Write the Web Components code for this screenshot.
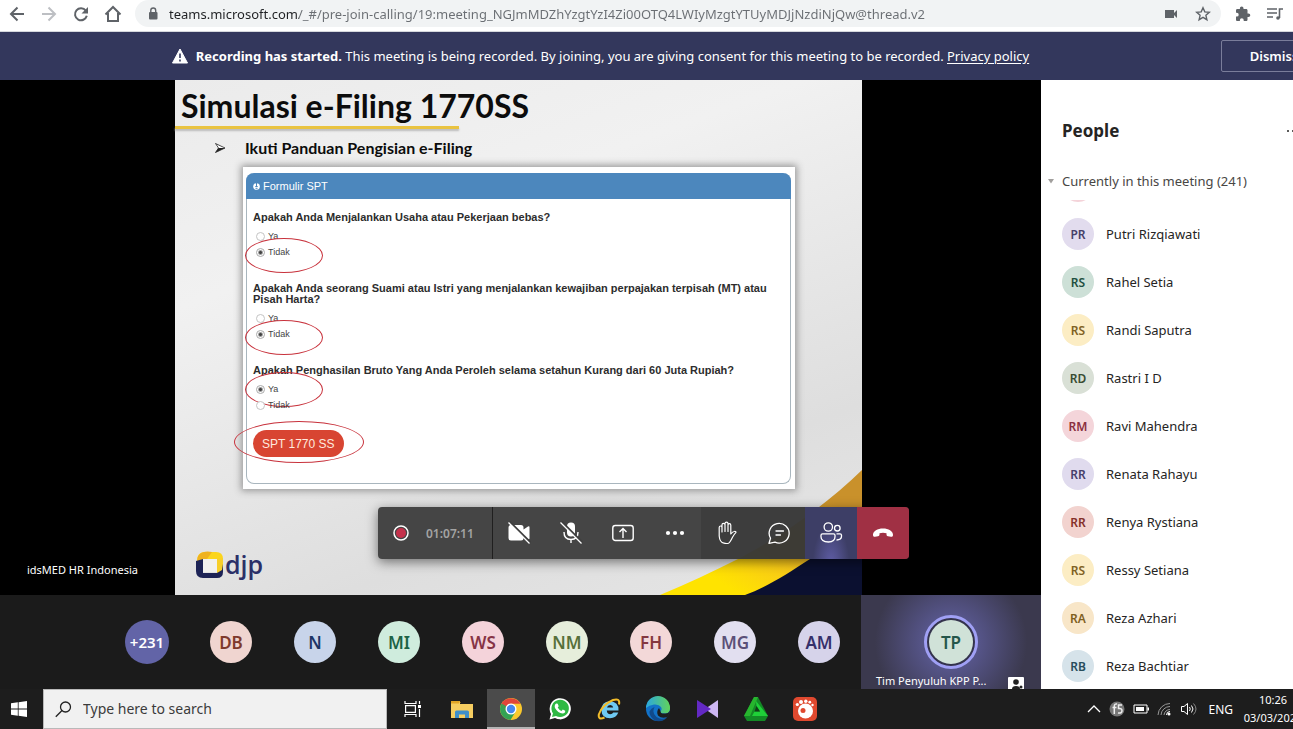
<!DOCTYPE html>
<html lang="en">
<head>
<meta charset="utf-8">
<title>Meeting</title>
<style>
    html, body {
        height: 100%;
        margin: 0;
    }

    body {
        font-family: "Noto Sans", "Open Sans", sans-serif;
        font-size: 13px;
        overflow: hidden;
    }
</style>
</head>
<body>
<meeting-app></meeting-app>

<script>
// Small helper: every element here renders into an open shadow root
class BaseElement extends HTMLElement {
    constructor() {
        super();
        this.attachShadow({ mode: 'open' });
    }

    connectedCallback() {
        this.render();
    }
}

const reset = `
    *, :host { box-sizing: border-box; }
    button { font: inherit; color: inherit; background: none; border: 0; padding: 0; margin: 0; }
    svg { display: block; }
`;

class BrowserBar extends BaseElement {
    render() {
        this.shadowRoot.innerHTML = `
            <style>
                ${reset}
                :host {
                    display: flex;
                    align-items: flex-start;
                    height: 32px;
                    background: #fff;
                    border-bottom: 1px solid #d5d7dc;
                    color: #5f6368;
                    padding-left: 1px;
                }
                button {
                    width: 32px;
                    height: 27px;
                    display: grid;
                    place-items: center;
                }
                .off { color: #bdbfc3; }
                .address {
                    flex: 1;
                    display: flex;
                    align-items: center;
                    height: 27px;
                    margin: 0 6px;
                    padding: 0 2px 0 12px;
                    border-radius: 14px;
                    background: #f1f3f4;
                }
                input {
                    flex: 1;
                    min-width: 0;
                    border: 0;
                    padding: 0 0 0 10px;
                    font: inherit;
                    line-height: 20px;
                    outline: 0;
                    background: linear-gradient(90deg, #202124 140px, #6a6e73 140px);
                    -webkit-background-clip: text;
                    background-clip: text;
                    -webkit-text-fill-color: transparent;
                }
                .spare { margin-right: 2px; }
            </style>
            <button aria-label="Back"><svg width="16" height="16" viewBox="0 0 16 16" fill="none" stroke="currentColor" stroke-width="2"><path d="M15 8H2M8.500 1.500L2 8l6.500 6.500"/></svg></button>
            <button class="off" aria-label="Forward"><svg width="16" height="16" viewBox="0 0 16 16" fill="none" stroke="currentColor" stroke-width="2"><path d="M1 8h13M7.500 1.500L14 8l-6.500 6.500"/></svg></button>
            <button aria-label="Reload"><svg width="16" height="16" viewBox="0 0 16 16"><path d="M12.800 4.600A6 6 0 1 0 13.800 9.800" fill="none" stroke="currentColor" stroke-width="2"/><path d="M15 1v6.500H8.500z" fill="currentColor"/></svg></button>
            <button aria-label="Home"><svg width="18" height="18" viewBox="0 0 18 18" fill="none" stroke="currentColor" stroke-width="2"><path d="M1.500 9.500L9 2l7.500 7.500M4 8v8h10V8"/></svg></button>
            <div class="address">
                <svg width="12" height="14" viewBox="0 0 12 14"><rect x="2" y="5" width="8.500" height="7.500" rx="1" fill="currentColor"/><path d="M3.800 5.500V3.500a2.400 2.400 0 0 1 4.900 0v2" fill="none" stroke="currentColor" stroke-width="1.400"/></svg>
                <input type="text" aria-label="Address" value="teams.microsoft.com/_#/pre-join-calling/19:meeting_NGJmMDZhYzgtYzI4Zi00OTQ4LWIyMzgtYTUyMDJjNzdiNjQw@thread.v2">
                <button aria-label="Camera"><svg width="14" height="10" viewBox="0 0 14 10" fill="currentColor"><path d="M1 1h9v3l3-3v8l-3-3v3H1z"/></svg></button>
                <button aria-label="Bookmark"><svg width="16" height="16" viewBox="0 0 16 16" fill="none" stroke="currentColor" stroke-width="1.400"><path d="M8 1.800l1.800 4.100 4.500.4-3.400 3 1 4.400L8 11.400l-3.900 2.300 1-4.400-3.400-3 4.500-.4z"/></svg></button>
            </div>
            <button aria-label="Extensions"><svg width="16" height="16" viewBox="0 0 16 16" fill="currentColor"><path d="M13.500 7.500h-1V4.300c0-.7-.6-1.300-1.300-1.300H8.500V2.300a1.800 1.800 0 0 0-3.600 0V3H2.300C1.600 3 1 3.600 1 4.300v2.500h.8a1.900 1.900 0 0 1 0 3.800H1v3.100c0 .7.600 1.300 1.300 1.300h2.600v-.9a1.900 1.900 0 0 1 3.800 0v.9h2.500c.7 0 1.300-.6 1.300-1.300v-2.600h1a1.800 1.800 0 0 0 0-3.600z"/></svg></button>
            <button class="spare" aria-label="Media"><svg width="18" height="14" viewBox="0 0 18 14" fill="none" stroke="currentColor" stroke-width="1.600"><path d="M1 2h10M1 6h10M1 10h6M13.500 11V2H17"/><circle cx="12" cy="11" r="1.800" fill="currentColor" stroke="none"/></svg></button>
        `;
    }
}

class RecordingBanner extends BaseElement {
    render() {
        this.shadowRoot.innerHTML = `
            <style>
                ${reset}
                :host {
                    display: flex;
                    align-items: center;
                    height: 48px;
                    background: #33375c;
                    color: #fff;
                    overflow: hidden;
                }
                p {
                    flex: 1;
                    margin: 0 20px 0 0;
                    display: flex;
                    align-items: center;
                    justify-content: center;
                    white-space: nowrap;
                }
                svg { margin-right: 8px; }
                a { color: inherit; text-underline-offset: 2px; }
                button {
                    height: 32px;
                    width: 106px;
                    margin-right: -34px;
                    border: 1px solid #7a7d9a;
                    border-radius: 2px;
                    font-weight: 600;
                }
            </style>
            <p>
                <svg width="16" height="16" viewBox="0 0 16 16"><path d="M8 1l7.500 14H.500z" fill="#fff" stroke="#fff" stroke-linejoin="round"/><path d="M8 5.500v4.500M8 11.500v2" stroke="#33375c" stroke-width="1.600"/></svg>
                <span><b>Recording has started.</b> This meeting is being recorded. By joining, you are giving consent for this meeting to be recorded. <a href="#">Privacy policy</a></span>
            </p>
            <button>Dismiss</button>
        `;
    }
}

class AvatarBadge extends BaseElement {
    render() {
        this.shadowRoot.innerHTML = `
            <style>
                :host {
                    display: grid;
                    place-items: center;
                    flex: none;
                    width: var(--size, 32px);
                    height: var(--size, 32px);
                    border-radius: 50%;
                    background: ${this.getAttribute('fill')};
                    color: ${this.getAttribute('ink')};
                    font-size: var(--text, 12px);
                    font-weight: 600;
                }
            </style>
            <slot></slot>
        `;
    }
}

class PersonRow extends BaseElement {
    render() {
        this.shadowRoot.innerHTML = `
            <style>
                :host {
                    display: flex;
                    align-items: center;
                    gap: 12px;
                    height: 48px;
                    flex: none;
                    color: #252423;
                }
            </style>
            <avatar-badge fill="${this.getAttribute('fill')}" ink="${this.getAttribute('ink')}">${this.getAttribute('initials') || ''}</avatar-badge>
            <slot></slot>
        `;
    }
}

const people = [
    ['', '', '#f4d3d9', '#8e3b4b'],
    ['PR', 'Putri Rizqiawati', '#e2dcee', '#47416a'],
    ['RS', 'Rahel Setia', '#cde0d7', '#1f5040'],
    ['RS', 'Randi Saputra', '#fcedc4', '#806223'],
    ['RD', 'Rastri I D', '#d9e0d6', '#3a4d33'],
    ['RM', 'Ravi Mahendra', '#f4d5da', '#8b3040'],
    ['RR', 'Renata Rahayu', '#e0dbee', '#47416a'],
    ['RR', 'Renya Rystiana', '#f2d3cf', '#85302a'],
    ['RS', 'Ressy Setiana', '#fcedc4', '#806223'],
    ['RA', 'Reza Azhari', '#f8e6c8', '#80601f'],
    ['RB', 'Reza Bachtiar', '#d6e3ea', '#294d5c']
];

class PeoplePanel extends BaseElement {
    render() {
        this.shadowRoot.innerHTML = `
            <style>
                ${reset}
                :host {
                    display: flex;
                    flex-direction: column;
                    min-height: 0;
                    background: #fff;
                    color: #484644;
                    overflow: hidden;
                }
                header {
                    display: flex;
                    align-items: center;
                    justify-content: space-between;
                    padding: 39px 0 0 21px;
                    margin-right: -8px;
                }
                h2 {
                    margin: 0;
                    font-size: 17px;
                    line-height: 24px;
                    color: #252423;
                }
                .group {
                    display: flex;
                    align-items: center;
                    gap: 7px;
                    padding-left: 6px;
                    margin-top: 28px;
                    line-height: 20px;
                }
                .list {
                    flex: 1;
                    display: flex;
                    flex-direction: column;
                    min-height: 0;
                    margin-top: 9px;
                    padding-left: 21px;
                    overflow: hidden;
                }
            </style>
            <header>
                <h2>People</h2>
                <button aria-label="More options"><svg width="15" height="4" viewBox="0 0 15 4" fill="#252423"><circle cx="2" cy="2" r="1"/><circle cx="7" cy="2" r="1"/><circle cx="12" cy="2" r="1"/></svg></button>
            </header>
            <button class="group"><svg width="8" height="5" viewBox="0 0 8 5"><path d="M1 0h6L4 4.500z" fill="#a19f9d"/></svg>Currently in this meeting (241)</button>
            <div class="list">
                ${people.map(([initials, name, fill, ink]) =>
                    `<person-row initials="${initials}" fill="${fill}" ink="${ink}">${name}</person-row>`).join('')}
            </div>
        `;
        const list = this.shadowRoot.querySelector('.list');
        requestAnimationFrame(() => { list.scrollTop = 38; });
    }
}

class FormQuestion extends BaseElement {
    render() {
        const picked = this.getAttribute('answer');
        const options = ['Ya', 'Tidak'].map(text => `
            <label class="${text === picked ? 'picked' : ''}">
                <input type="radio" name="answer" ${text === picked ? 'checked' : ''}>${text}
            </label>`).join('');
        this.shadowRoot.innerHTML = `
            <style>
                ${reset}
                :host { display: block; }
                fieldset { border: 0; margin: 0; padding: 0; min-width: 0; }
                legend {
                    padding: 0;
                    margin-bottom: 5px;
                    font-weight: bold;
                    font-size: 11px;
                    line-height: 11px;
                    color: #2d2d2d;
                }
                label {
                    position: relative;
                    display: flex;
                    align-items: center;
                    gap: 3px;
                    height: 16px;
                    padding-left: 3px;
                    font-size: 9px;
                    color: #444;
                }
                input {
                    appearance: none;
                    width: 9px;
                    height: 9px;
                    margin: 0;
                    border: 1px solid #c4c4c4;
                    border-radius: 50%;
                    background: #fff;
                }
                input:checked {
                    border-color: #aaa;
                    background: radial-gradient(circle, #444 0 1px, #fff 3px);
                }
                /* hand-drawn ring round the chosen answer */
                .picked::after {
                    content: "";
                    position: absolute;
                    left: -8px;
                    top: var(--ring-top, -6px);
                    width: 76px;
                    height: 33px;
                    border: 1px solid #c8323c;
                    border-radius: 50%;
                }
            </style>
            <fieldset>
                <legend><slot></slot></legend>
                ${options}
            </fieldset>
        `;
    }
}

class SharedSlide extends BaseElement {
    render() {
        this.shadowRoot.innerHTML = `
            <style>
                ${reset}
                :host {
                    position: relative;
                    display: flex;
                    flex-direction: column;
                    background: linear-gradient(160deg, #ebebeb, #f1f1f1 30%, #dedede 75%, #e6e6e6);
                    color: #0c0c0c;
                }
                .swoosh { position: absolute; right: 0; bottom: 0; }
                h1 {
                    margin: 6px 0 0 6px;
                    font: bold 32px/40px Lato, sans-serif;
                    white-space: nowrap;
                }
                .rule {
                    width: 284px;
                    height: 3px;
                    background: #e9c341;
                    box-shadow: 0 2px 2px #bbb;
                }
                .point {
                    display: flex;
                    align-items: center;
                    gap: 19px;
                    margin: 9px 0 0 40px;
                    font: bold 16px/20px Lato, sans-serif;
                }
                .card {
                    position: relative;
                    margin: 9px 67px 0 68px;
                    padding: 6px 4px 5px 3px;
                    background: #fff;
                    box-shadow: 0 0 7px 2px #999;
                    font-family: "Liberation Sans", Arial, sans-serif;
                }
                .form {
                    border: 1px solid #a9b6be;
                    border-top: 0;
                    border-radius: 8px;
                }
                .form header {
                    display: flex;
                    align-items: center;
                    gap: 3px;
                    height: 26px;
                    margin: 0 -1px;
                    padding-left: 7px;
                    border-radius: 8px 8px 0 0;
                    background: #4c87bd;
                    color: #fff;
                    font-size: 11px;
                }
                .fields {
                    display: flex;
                    flex-direction: column;
                    gap: 23px;
                    padding: 13px 8px 26px 6px;
                }
                .send { position: relative; width: max-content; margin-top: -6px; }
                .send button {
                    display: block;
                    height: 27px;
                    padding: 0 9px;
                    border-radius: 14px;
                    background: #d84532;
                    color: #ffeadf;
                    font-size: 12px;
                }
                .send::after {
                    content: "";
                    position: absolute;
                    inset: -9px -20px -6px -19px;
                    border: 1px solid #c8323c;
                    border-radius: 50%;
                }
                .last { --ring-top: -9px; }
                footer {
                    display: flex;
                    align-items: center;
                    gap: 2px;
                    margin: auto 0 17px 21px;
                    font: 600 25px/28px "Open Sans", sans-serif;
                    color: #2b3068;
                }
            </style>
            <svg class="swoosh" width="210" height="130" viewBox="0 0 210 130">
                <defs><linearGradient id="gold" x1="0" y1="1" x2="1" y2="0"><stop offset=".2" stop-color="#ffe300"/><stop offset=".5" stop-color="#f6c021"/><stop offset=".8" stop-color="#c9912b"/></linearGradient></defs>
                <path d="M8 130C35 119 60 107 86 94C125 74 172 42 210 5V130z" fill="url(#gold)"/>
                <path d="M93 130C115 122 135 109 158 94C176 82 196 68 210 56V130z" fill="#0b1030"/>
            </svg>
            <h1>Simulasi e-Filing 1770SS</h1>
            <div class="rule"></div>
            <div class="point">
                <svg width="11" height="10" viewBox="0 0 11 10"><path d="M.500.500L10 5 .500 9.500 3.500 5z" fill="#fff" stroke="#222" stroke-width=".8"/><path d="M3.500 5H10L.500 9.500z" fill="#222"/></svg>
                Ikuti Panduan Pengisian e-Filing
            </div>
            <div class="card">
                <div class="form">
                    <header><svg width="7" height="8" viewBox="0 0 7 8"><circle cx="3.500" cy="4.500" r="3.300" fill="#fff"/><path d="M3.500 1v4M2.300 4.500h2.400M2.500 6.300h2" stroke="#4c87bd"/></svg>Formulir SPT</header>
                    <div class="fields">
                        <form-question answer="Tidak">Apakah Anda Menjalankan Usaha atau Pekerjaan bebas?</form-question>
                        <form-question answer="Tidak">Apakah Anda seorang Suami atau Istri yang menjalankan kewajiban perpajakan terpisah (MT) atau Pisah Harta?</form-question>
                        <form-question class="last" answer="Ya">Apakah Penghasilan Bruto Yang Anda Peroleh selama setahun Kurang dari 60 Juta Rupiah?</form-question>
                        <div class="send"><button>SPT 1770 SS</button></div>
                    </div>
                </div>
            </div>
            <footer>
                <svg width="27" height="27" viewBox="0 0 27 27">
                    <path d="M1 10Q1 1 9 1h11q7 0 7 7v6l-6-6H8z" fill="#fbd51c"/>
                    <path d="M7 1.200Q11 0 16 1l-5 7H7L1 11Q1 3 7 1.200z" fill="#efb21f"/>
                    <path d="M0 10l7-2v14h14V8l6 5v8q0 6-6 6H7q-7 0-7-7z" fill="#1d2356"/>
                    <path d="M21 8l6-1v6l-1 6-5 3z" fill="#f7cf2a"/>
                    <rect x="7" y="8" width="14" height="13" fill="#f1f1ef"/>
                </svg>
                djp
            </footer>
        `;
    }
}

class CallControls extends BaseElement {
    render() {
        this.shadowRoot.innerHTML = `
            <style>
                ${reset}
                :host {
                    display: flex;
                    height: 52px;
                    border-radius: 4px;
                    overflow: hidden;
                    background: rgba(60, 60, 60, .95);
                    box-shadow: 0 3px 12px rgba(0, 0, 0, .5);
                    color: #fff;
                }
                .status {
                    display: flex;
                    align-items: center;
                    gap: 17px;
                    width: 115px;
                    padding-left: 15px;
                    border-right: 1px solid #201f1f;
                    color: #a3a3a3;
                    font-size: 12px;
                    font-weight: 600;
                }
                button {
                    width: 52px;
                    display: grid;
                    place-items: center;
                }
                .dim { background: rgba(45, 45, 45, .35); }
                .on { background: radial-gradient(ellipse at 50% 110%, #5f5da6, #3d3e66 50%); }
                .end { background: #a03044; }
            </style>
            <div class="status">
                <svg width="16" height="16" viewBox="0 0 16 16"><circle cx="8" cy="8" r="7" fill="none" stroke="#fff" stroke-width="1.500"/><circle cx="8" cy="8" r="5" fill="#c4314b"/></svg>
                01:07:11
            </div>
            <button aria-label="Turn camera on"><svg width="24" height="24" viewBox="0 0 24 24"><path d="M1.500 6.500Q1.500 4 4 4h10q2.500 0 2.500 2.500V8.500L21 5.500q1.500-.8 1.500.8v11q0 1.600-1.500.8l-4.500-3v2q0 2.500-2.500 2.500H4q-2.500 0-2.500-2.500z" fill="#fff"/><path d="M2.500.500l21 21" stroke="#3f3f3f" stroke-width="2"/><path d="M1.500 1.500l21 21" stroke="#fff" stroke-width="1.300"/></svg></button>
            <button aria-label="Unmute"><svg width="24" height="24" viewBox="0 0 24 24"><rect x="8" y="1.500" width="8" height="14" rx="4" fill="#fff"/><path d="M5 11q0 7.500 7 7.500t7-7.500M12 18.500V22" fill="none" stroke="#fff" stroke-width="1.400"/><path d="M2.500.500l21 21" stroke="#3f3f3f" stroke-width="2"/><path d="M1.500 1.500l21 21" stroke="#fff" stroke-width="1.300"/></svg></button>
            <button aria-label="Share"><svg width="24" height="24" viewBox="0 0 24 24" fill="none" stroke="#fff" stroke-width="1.400"><rect x="1.800" y="4.500" width="20.400" height="15" rx="2.500"/><path d="M12 17V8M8.500 11L12 7.500l3.500 3.500"/></svg></button>
            <button aria-label="More actions"><svg width="20" height="6" viewBox="0 0 20 6" fill="#fff"><circle cx="3" cy="3" r="2.100"/><circle cx="10" cy="3" r="2.100"/><circle cx="17" cy="3" r="2.100"/></svg></button>
            <button class="dim" aria-label="Raise hand"><svg width="24" height="24" viewBox="0 0 24 24" fill="none" stroke="#fff" stroke-width="1.200" stroke-linejoin="round" stroke-linecap="round"><path d="M4.200 15V6.500q0-1.500 1.400-1.500T7 6.500V3.800q0-1.500 1.500-1.500T10 3.800V2.700q0-1.500 1.500-1.500T13 2.700v1.500q0-1.500 1.400-1.500t1.400 1.500V13q2-2.500 3.500-2.500 2.200-.3 1.500 1.200-1.500 1.500-3.300 4.500-2.500 5.300-4 6-2 .600-4.500 0-4.300-.8-4.800-7.200zM7 6.500V11M10 4v6.500M13 4v6.500"/></svg></button>
            <button class="dim" aria-label="Chat"><svg width="24" height="24" viewBox="0 0 24 24" fill="none" stroke="#fff" stroke-width="1.300" stroke-linejoin="round" stroke-linecap="round"><path d="M3.500 17.200A10 9.800 0 1 1 8 21.200L2 22.300z"/><path d="M9 10h7.500M9 14h4.500"/></svg></button>
            <button class="on" aria-label="People"><svg width="24" height="24" viewBox="0 0 24 24" fill="none" stroke="#fff" stroke-width="1.300"><circle cx="9.300" cy="6" r="4.200"/><circle cx="18.300" cy="7.200" r="2.800"/><path d="M3.500 12.800h11q1.500 0 1.500 1.500v1.500q0 5-6.500 5.200-7.500-.2-7.500-5.200v-1.500q0-1.500 1.500-1.500zM17.500 12.800h3.500q1.500 0 1.500 1.500v1q0 3.700-5 3.700"/></svg></button>
            <button class="end" aria-label="Leave"><svg width="22" height="10" viewBox="0 0 22 10"><path d="M11 .500c5.500 0 10 2.500 10 6.300 0 1.500-.7 2.200-2 2l-3-.6c-1.300-.3-1.500-1-1.500-2V5.300q-3.500-1.200-7 0v.9c0 1-.2 1.700-1.500 2l-3 .6c-1.300.2-2-.5-2-2C1 3 5.500.500 11 .500z" fill="#fff"/></svg></button>
        `;
    }
}

const participants = [
    ['DB', '#f0d5d0', '#7f3a2c'],
    ['N', '#c8d4ea', '#1d3566'],
    ['MI', '#cfecdd', '#1d6246'],
    ['WS', '#f4d3da', '#863345'],
    ['NM', '#e6eedb', '#56703a'],
    ['FH', '#f3d8d8', '#853840'],
    ['MG', '#e2dff0', '#5b5078'],
    ['AM', '#d6d3ea', '#35306a']
];

class ParticipantStrip extends BaseElement {
    render() {
        this.shadowRoot.innerHTML = `
            <style>
                ${reset}
                :host {
                    display: flex;
                    height: 94px;
                    background: #1b1b1b;
                }
                ul {
                    flex: 1;
                    display: flex;
                    justify-content: flex-end;
                    align-items: center;
                    margin: 0;
                    padding: 0;
                    list-style: none;
                    --size: 42px;
                    --text: 17px;
                }
                li {
                    width: 84px;
                    display: grid;
                    place-items: center;
                }
                .more { --size: 44px; --text: 15px; }
                .speaker {
                    display: flex;
                    flex-direction: column;
                    align-items: center;
                    width: 180px;
                    padding-top: 20px;
                    overflow: hidden;
                    background: radial-gradient(circle at 50% 50%, #5a5992 20px, #3b394e 76px);
                    color: #fff;
                    --size: 44px;
                    --text: 17px;
                }
                .ring {
                    flex: none;
                    padding: 2px;
                    border: 3px solid #a0a0f5;
                    border-radius: 50%;
                    background: #34334d;
                }
                .name {
                    align-self: stretch;
                    display: flex;
                    justify-content: space-between;
                    align-items: flex-start;
                    padding: 0 17px 0 15px;
                    margin-top: 4px;
                    font-size: 11px;
                    line-height: 16px;
                }
                .name svg { flex: none; margin-top: 4px; }
            </style>
            <ul>
                <li class="more"><avatar-badge fill="#6264a7" ink="#fff">+231</avatar-badge></li>
                ${participants.map(([initials, fill, ink]) =>
                    `<li><avatar-badge fill="${fill}" ink="${ink}">${initials}</avatar-badge></li>`).join('')}
            </ul>
            <div class="speaker">
                <div class="ring"><avatar-badge fill="#d0e2d8" ink="#24564a">TP</avatar-badge></div>
                <div class="name">Tim Penyuluh KPP P...
                    <svg width="16" height="12" viewBox="0 0 16 12"><rect width="16" height="13" rx="1" fill="#fff"/><circle cx="8" cy="5" r="2.800" fill="#222"/><path d="M4 12q0-3 4-3t4 3" fill="#222"/><circle cx="13" cy="10" r="1.500" fill="#222"/></svg>
                </div>
            </div>
        `;
    }
}

class TaskBar extends BaseElement {
    render() {
        this.shadowRoot.innerHTML = `
            <style>
                ${reset}
                :host {
                    display: flex;
                    height: 40px;
                    background: #1d1d1d;
                    color: #fff;
                    overflow: hidden;
                }
                button { display: grid; place-items: center; }
                .start { width: 43px; padding-right: 5px; }
                .search {
                    display: flex;
                    align-items: center;
                    gap: 11px;
                    width: 344px;
                    padding-left: 11px;
                    background: #f1f1f1;
                    border: 1px solid #b9b9b9;
                }
                .search input {
                    flex: 1;
                    min-width: 0;
                    border: 0;
                    padding: 0;
                    outline: 0;
                    background: none;
                    font: inherit;
                    font-size: 14px;
                    line-height: 20px;
                }
                .search input::placeholder { color: #3b3b3b; opacity: 1; }
                nav {
                    flex: 1;
                    display: flex;
                    gap: 1px;
                    padding-left: 2px;
                }
                nav button { width: 48px; }
                .active {
                    background: #4b4b4b;
                    box-shadow: inset 0 -2px #b5b5b5;
                }
                .tray {
                    display: flex;
                    align-items: center;
                    gap: 8px;
                    font-size: 12px;
                }
                .lang { margin-left: 3px; }
                .clock {
                    width: 64px;
                    margin-right: -12px;
                    text-align: center;
                    font-size: 11px;
                    line-height: 18px;
                }
            </style>
            <button class="start" aria-label="Start"><svg width="16" height="16" viewBox="0 0 16 16" fill="#fff"><path d="M0 2.200L6.800 1.300V7.600H0zM7.600 1.200L16 0v7.600H7.600zM0 8.400h6.800v6.300L0 13.800zM7.600 8.400H16V16l-8.400-1.200z"/></svg></button>
            <label class="search">
                <svg width="17" height="17" viewBox="0 0 17 17" fill="none" stroke="#222" stroke-width="1.300"><circle cx="10.500" cy="6" r="5"/><path d="M7 9.500L.800 15.800"/></svg>
                <input type="text" placeholder="Type here to search" aria-label="Search">
            </label>
            <nav>
                <button aria-label="Task view"><svg width="18" height="16" viewBox="0 0 18 16" fill="none" stroke="#fff" stroke-width="1.200"><path d="M1 0v2.500h11V0M1 16v-2.500h11V16M1.600 4.600h9.800v6.800H1.600zM15.500 0v3M15.500 8v8"/><path d="M14 4h3v3h-3z" fill="#fff" stroke="none"/></svg></button>
                <button aria-label="File Explorer"><svg width="22" height="19" viewBox="0 0 22 19"><path d="M0 1h8l2 2H0z" fill="#d99a1c"/><path d="M0 1h9v3h13v14H0z" fill="#f6cd60"/><path d="M0 1h9l-1 2.500H0z" fill="#e1a526"/><path d="M4 18v-6q0-1.500 1.500-1.500h11Q18 10.500 18 12v6h-4v-3.500H8V18z" fill="#3f8fc9"/></svg></button>
                <button class="active" aria-label="Chrome"><svg width="24" height="24" viewBox="0 0 24 24"><circle cx="12" cy="12" r="11" fill="#fbc92d"/><path d="M12 12L2.500 6.500A11 11 0 0 0 11.500 23l5.200-8.500z" fill="#33a353"/><path d="M12 12L2.500 6.500A11 11 0 0 1 21.500 6.800H12z" fill="#e0453a"/><path d="M2.500 6.500L7 14l5-7.200z" fill="#e0453a"/><path d="M2.500 6.500L7.300 14.500 12 12z" fill="#33a353"/><circle cx="12" cy="12" r="5.500" fill="#fff"/><circle cx="12" cy="12" r="4.200" fill="#4587ee"/></svg></button>
                <button aria-label="WhatsApp"><svg width="24" height="24" viewBox="0 0 24 24"><path d="M1.500 22.500L3 17A10.600 10.600 0 1 1 7 21z" fill="#fff"/><path d="M4 20l1-3.700A8.700 8.700 0 1 1 8 19z" fill="#2fb944"/><path d="M8.200 6.500l1.500.2 1 2.500-1 1.300q1.300 2.500 3.800 3.500l1.300-1.400 2.400 1.200q.3 2.500-2.700 2.700-4.500-.2-7.500-5.500-1-3 1.200-4.500z" fill="#fff"/></svg></button>
                <button aria-label="Internet Explorer"><svg width="24" height="24" viewBox="0 0 24 24" fill="none"><path d="M4.500 13.500q-.3-9 8.300-9.200 9 .2 8.700 9.200H9.800q.3 3.800 3.500 3.800 2 0 3-1.700h5q-2 5.600-8.300 5.600-8.300-.2-8.500-7.700zm5.500-3h6.200q-.3-2.500-3-2.500T10 10.500z" fill="#6fcaf3" fill-rule="evenodd"/><path d="M22 7.500Q23.500.800 16 3 5 8 1.800 17.500q-.8 6 5.700 3" stroke="#f3bd2b" stroke-width="2"/></svg></button>
                <button aria-label="Edge"><svg width="26" height="26" viewBox="0 0 26 26"><defs><linearGradient id="sea"><stop stop-color="#2aa7e0"/><stop offset="1" stop-color="#62d35a"/></linearGradient></defs><circle cx="13" cy="13" r="12" fill="#1272c8"/><path d="M1 12A12 12 0 0 1 25 12q.3 5-5 5.500-5 0-4.500-2.500 2-1.500.5-4-2-3-7-2.500-5 .5-8 3.500z" fill="url(#sea)"/><path d="M9.500 11q-3 6 2 10 4.500 3.500 11 .2Q17 27 9.500 24.500 4 20 4.500 15.500 6 12 9.500 11z" fill="#104a8c"/><path d="M15.500 15q-.5 3 5 2.500 3.500-.5 4.500-3-.3 3.500-2.500 6.500-6 2-9.500-1.500-2-4 1-7.500z" fill="#1d1d1d"/></svg></button>
                <button aria-label="Media player"><svg width="22" height="18" viewBox="0 0 22 18"><path d="M22 0v18L9 9z" fill="#cdb7f2"/><path d="M1 0l14 9L1 18z" fill="#6329c4"/></svg></button>
                <button aria-label="Triangle app"><svg width="24" height="24" viewBox="0 0 24 24"><path d="M10 0h4l10 19-3 5H3l-3-5z" fill="#138a25"/><path d="M10 0h4L6 19H0z" fill="#27b52e"/><path d="M12 4l12 15H8l2.500-4.500h5.500L12.500 9z" fill="#1fd038"/><path d="M12.500 9l3.500 5.500h-5.500z" fill="#123d18"/></svg></button>
                <button aria-label="GOM Player"><svg width="24" height="24" viewBox="0 0 24 24"><rect width="24" height="24" rx="5" fill="#e0492f"/><circle cx="12.500" cy="14" r="7.500" fill="#fff"/><circle cx="10" cy="13.500" r="2.500" fill="#e0492f"/><circle cx="4.300" cy="7.500" r="1.600" fill="#fff"/><circle cx="8" cy="5" r="2" fill="#fff"/><circle cx="12.800" cy="4.200" r="1.700" fill="#fff"/><circle cx="16.800" cy="5.200" r="1.400" fill="#fff"/><circle cx="19.500" cy="8" r="1.200" fill="#fff"/></svg></button>
            </nav>
            <div class="tray">
                <svg width="14" height="8" viewBox="0 0 14 8" fill="none" stroke="#fff" stroke-width="1.300"><path d="M1 7l6-6 6 6"/></svg>
                <svg width="16" height="16" viewBox="0 0 16 16"><circle cx="8" cy="8" r="7.500" fill="#777"/><path d="M8 3Q5.500 2.500 5.300 5v8M3.500 6.500h4M13 4H9.500v3.500q3.500-.5 3.500 2.300T9 12" fill="none" stroke="#eee" stroke-width="1.500"/></svg>
                <svg width="16" height="16" viewBox="0 0 16 16"><path d="M1 4h13v8H1z" fill="none" stroke="#fff"/><path d="M3 6h8v4H3zM14.500 6.500H16v3h-1.500z" fill="#fff"/></svg>
                <svg width="16" height="16" viewBox="0 0 16 16" fill="none" stroke="#999"><path d="M1 14A12 12 0 0 1 13 2.500M4 14a9 9 0 0 1 9-8.500M7 14a6 6 0 0 1 6-5.500"/><path d="M9.500 14A3.500 3.500 0 0 1 13 10.500" stroke="#fff"/><circle cx="12" cy="13" r="1.500" fill="#fff" stroke="none"/></svg>
                <svg width="16" height="16" viewBox="0 0 16 16" fill="none" stroke="#fff"><path d="M.500 5.500h2.500L6.500 2.500v11L3 10.500H.500zM8.500 6q1.500 2 0 4M10.500 4.500q3 3.500 0 7"/><path d="M12.500 2.500q5 5.500 0 11" stroke="#888"/></svg>
                <span class="lang">ENG</span>
                <div class="clock"><time>10:26</time><br><time>03/03/2021</time></div>
            </div>
        `;
    }
}

class MeetingApp extends BaseElement {
    render() {
        this.shadowRoot.innerHTML = `
            <style>
                ${reset}
                :host {
                    display: flex;
                    flex-direction: column;
                    height: 100vh;
                }
                main {
                    flex: 1;
                    display: flex;
                    min-height: 0;
                }
                .stage {
                    flex: 1;
                    display: flex;
                    flex-direction: column;
                    min-width: 0;
                }
                .share {
                    position: relative;
                    flex: 1;
                    display: grid;
                    grid-template-columns: 175fr 687fr 179fr;
                    min-height: 0;
                    background: #000;
                }
                .side {
                    align-self: end;
                    padding: 0 0 15px 27px;
                    color: #fff;
                    font-size: 11px;
                    line-height: 20px;
                    white-space: nowrap;
                }
                people-panel { width: 252px; }
                call-controls {
                    position: absolute;
                    left: 378px;
                    bottom: 36px;
                }
            </style>
            <browser-bar></browser-bar>
            <recording-banner></recording-banner>
            <main>
                <section class="stage">
                    <div class="share">
                        <div class="side">idsMED HR Indonesia</div>
                        <shared-slide></shared-slide>
                        <call-controls></call-controls>
                    </div>
                    <participant-strip></participant-strip>
                </section>
                <people-panel></people-panel>
            </main>
            <task-bar></task-bar>
        `;
    }
}

customElements.define('browser-bar', BrowserBar);
customElements.define('recording-banner', RecordingBanner);
customElements.define('avatar-badge', AvatarBadge);
customElements.define('person-row', PersonRow);
customElements.define('people-panel', PeoplePanel);
customElements.define('form-question', FormQuestion);
customElements.define('shared-slide', SharedSlide);
customElements.define('call-controls', CallControls);
customElements.define('participant-strip', ParticipantStrip);
customElements.define('task-bar', TaskBar);
customElements.define('meeting-app', MeetingApp);
</script>
</body>
</html>
